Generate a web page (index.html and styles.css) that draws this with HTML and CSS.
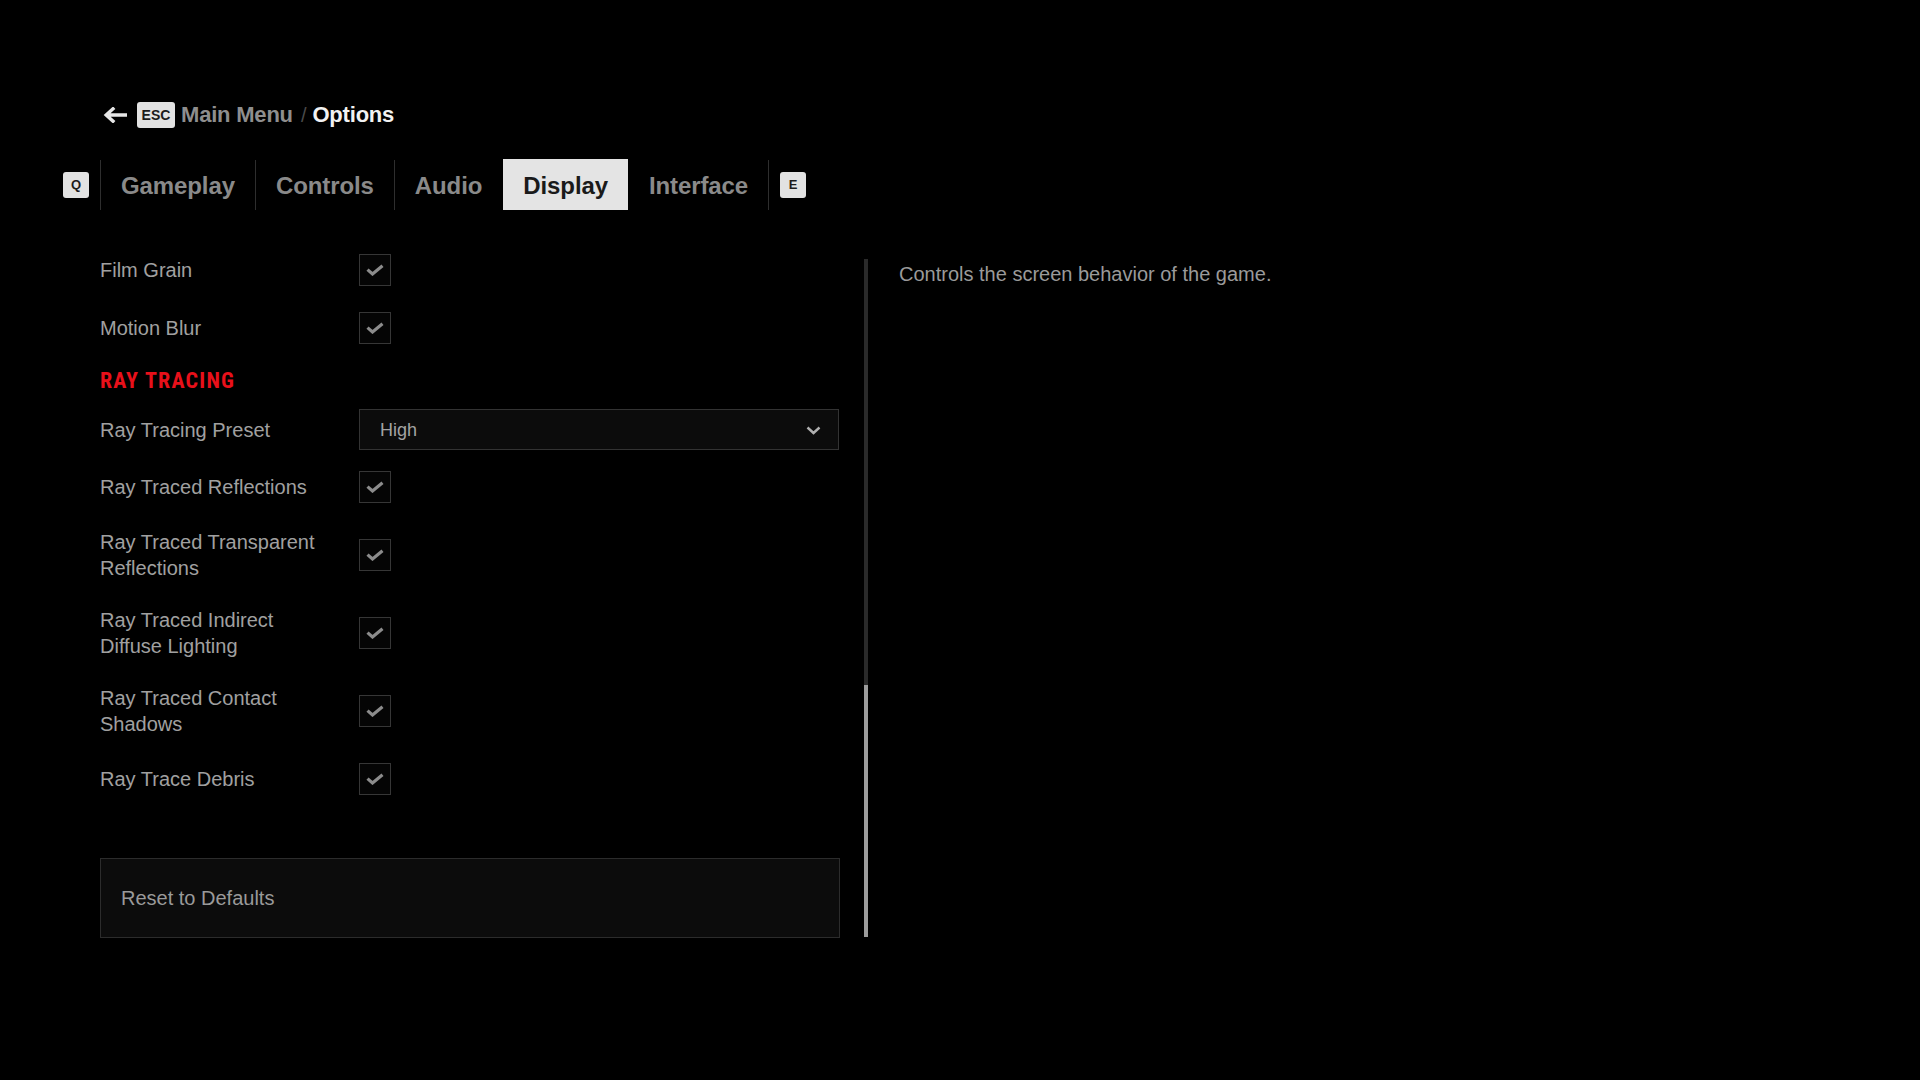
FILE: index.html
```html
<!DOCTYPE html>
<html lang="en">
<head>
<meta charset="utf-8">
<title>Options - Display</title>
<link rel="stylesheet" href="styles.css">
</head>
<body>
<div class="page">
  <div class="breadcrumb">
    <svg class="back-arrow" width="24" height="16" viewBox="0 0 24 16" aria-hidden="true">
      <path d="M23 8H4M10 1.8L3.2 8L10 14.2" fill="none" stroke="#e6e6e6" stroke-width="3.4" stroke-linecap="square" stroke-linejoin="miter"/>
    </svg>
    <span class="key key-esc">ESC</span>
    <span class="crumb">Main Menu</span>
    <span class="crumb-sep">/</span>
    <span class="crumb crumb-current">Options</span>
  </div>

  <nav class="tabs">
    <span class="key key-tab">Q</span>
    <span class="tab-sep"></span>
    <span class="tab">Gameplay</span>
    <span class="tab-sep"></span>
    <span class="tab">Controls</span>
    <span class="tab-sep"></span>
    <span class="tab">Audio</span>
    <span class="tab-sep hidden"></span>
    <span class="tab active">Display</span>
    <span class="tab-sep hidden"></span>
    <span class="tab">Interface</span>
    <span class="tab-sep"></span>
    <span class="key key-tab key-e">E</span>
  </nav>

  <main class="content">
    <section class="settings">
      <div class="row">
        <div class="label">Film Grain</div>
        <div class="checkbox"><svg class="check" width="18" height="12" viewBox="0 0 18 12"><path d="M1.5 5.6L6.5 10L16.5 1.8" fill="none" stroke="#8c8c8c" stroke-width="3.2"/></svg></div>
      </div>
      <div class="row">
        <div class="label">Motion Blur</div>
        <div class="checkbox"><svg class="check" width="18" height="12" viewBox="0 0 18 12"><path d="M1.5 5.6L6.5 10L16.5 1.8" fill="none" stroke="#8c8c8c" stroke-width="3.2"/></svg></div>
      </div>

      <h2 class="section-title">RAY TRACING</h2>

      <div class="row row-select">
        <div class="label">Ray Tracing Preset</div>
        <div class="select">
          <span class="select-value">High</span>
          <svg class="chevron" width="15" height="9" viewBox="0 0 15 9"><path d="M1.5 1.5L7.5 7L13.5 1.5" fill="none" stroke="#b0b0b0" stroke-width="2.4"/></svg>
        </div>
      </div>
      <div class="row">
        <div class="label">Ray Traced Reflections</div>
        <div class="checkbox"><svg class="check" width="18" height="12" viewBox="0 0 18 12"><path d="M1.5 5.6L6.5 10L16.5 1.8" fill="none" stroke="#8c8c8c" stroke-width="3.2"/></svg></div>
      </div>
      <div class="row">
        <div class="label">Ray Traced Transparent Reflections</div>
        <div class="checkbox"><svg class="check" width="18" height="12" viewBox="0 0 18 12"><path d="M1.5 5.6L6.5 10L16.5 1.8" fill="none" stroke="#8c8c8c" stroke-width="3.2"/></svg></div>
      </div>
      <div class="row">
        <div class="label">Ray Traced Indirect Diffuse Lighting</div>
        <div class="checkbox"><svg class="check" width="18" height="12" viewBox="0 0 18 12"><path d="M1.5 5.6L6.5 10L16.5 1.8" fill="none" stroke="#8c8c8c" stroke-width="3.2"/></svg></div>
      </div>
      <div class="row">
        <div class="label">Ray Traced Contact Shadows</div>
        <div class="checkbox"><svg class="check" width="18" height="12" viewBox="0 0 18 12"><path d="M1.5 5.6L6.5 10L16.5 1.8" fill="none" stroke="#8c8c8c" stroke-width="3.2"/></svg></div>
      </div>
      <div class="row">
        <div class="label">Ray Trace Debris</div>
        <div class="checkbox"><svg class="check" width="18" height="12" viewBox="0 0 18 12"><path d="M1.5 5.6L6.5 10L16.5 1.8" fill="none" stroke="#8c8c8c" stroke-width="3.2"/></svg></div>
      </div>

      <button class="reset">Reset to Defaults</button>
    </section>

    <div class="scrollbar"><div class="scroll-thumb"></div></div>

    <aside class="description">Controls the screen behavior of the game.</aside>
  </main>
</div>
</body>
</html>
```

FILE: styles.css
```css
html, body {
  margin: 0;
  padding: 0;
  background: #000;
}

body {
  width: 1920px;
  height: 1080px;
  overflow: hidden;
  font-family: "Liberation Sans", Arial, sans-serif;
  color: #a3a3a3;
}

.page {
  padding-top: 102px;
}

/* Breadcrumb */
.breadcrumb {
  display: flex;
  align-items: center;
  height: 26px;
  padding-left: 103px;
}

.back-arrow {
  display: block;
  margin-right: 10px;
}

.key {
  display: inline-flex;
  align-items: center;
  justify-content: center;
  background: #e2e2e2;
  color: #1c1c1c;
  border-radius: 3px;
  font-weight: 700;
  box-sizing: border-box;
}

.key-esc {
  width: 38px;
  height: 26px;
  font-size: 14px;
  margin-right: 6px;
}

.crumb {
  font-size: 22px;
  font-weight: 700;
  color: #8e8e8e;
  line-height: 28px;
  letter-spacing: -0.2px;
}

.crumb-sep {
  font-size: 20px;
  color: #4a4a4a;
  margin: 0 6px 0 8px;
  line-height: 28px;
}

.crumb-current {
  color: #f2f2f2;
}

/* Tabs */
.tabs {
  display: flex;
  align-items: center;
  height: 51px;
  margin-top: 31px;
  padding-left: 63px;
}

.key-tab {
  width: 26px;
  height: 26px;
  font-size: 13px;
  margin-right: 11px;
}

.key-e {
  margin-right: 0;
  margin-left: 11px;
}

.tab-sep {
  width: 1px;
  height: 50px;
  background: #2e2e2e;
}

.tab-sep.hidden {
  background: transparent;
}

.tab {
  height: 51px;
  line-height: 53px;
  padding: 0 20px;
  font-size: 24px;
  font-weight: 700;
  color: #8a8a8a;
  letter-spacing: -0.1px;
}

.tab.active {
  background: #e4e4e4;
  color: #1a1a1a;
}

/* Content */
.content {
  display: flex;
  align-items: flex-start;
  margin-top: 31px;
}

.settings {
  width: 740px;
  margin-left: 100px;
  display: flex;
  flex-direction: column;
}

.row {
  display: flex;
  align-items: center;
  padding: 13px 0;
}

.row-select {
  padding: 8px 0;
}

.label {
  width: 259px;
  flex: none;
  font-size: 20px;
  line-height: 26px;
  color: #a0a0a0;
}

.row .label {
  padding-right: 24px;
  box-sizing: border-box;
}

.checkbox {
  width: 32px;
  height: 32px;
  box-sizing: border-box;
  border: 1px solid #363636;
  background: #050505;
  display: flex;
  align-items: center;
  justify-content: center;
}

.check {
  display: block;
}

.section-title {
  margin: 0;
  padding: 13px 0 9px;
  font-family: "Roboto Condensed", "DejaVu Sans Condensed", "Liberation Sans", sans-serif;
  font-weight: 700;
  font-size: 22px;
  line-height: 22px;
  letter-spacing: 1.2px;
  color: #e8101a;
}

.select {
  width: 480px;
  height: 41px;
  box-sizing: border-box;
  border: 1px solid #333;
  background: #0c0c0c;
  display: flex;
  align-items: center;
  justify-content: space-between;
  padding: 1px 17px 0 20px;
}

.select-value {
  font-size: 18px;
  color: #a3a3a3;
}

.chevron {
  display: block;
}

.reset {
  margin-top: 50px;
  width: 740px;
  height: 80px;
  box-sizing: border-box;
  border: 1px solid #2c2c2c;
  background: #0c0c0c;
  text-align: left;
  padding: 0 0 0 20px;
  font-family: "Liberation Sans", Arial, sans-serif;
  font-size: 20px;
  color: #9a9a9a;
}

/* Scrollbar */
.scrollbar {
  margin-left: 24px;
  margin-top: 18px;
  width: 4px;
  height: 678px;
  background: #2a2a2a;
  display: flex;
  flex-direction: column;
  justify-content: flex-end;
}

.scroll-thumb {
  height: 252px;
  background: #9c9c9c;
}

/* Description */
.description {
  margin-left: 31px;
  padding-top: 21px;
  font-size: 20px;
  line-height: 24px;
  color: #9a9a9a;
}
```
